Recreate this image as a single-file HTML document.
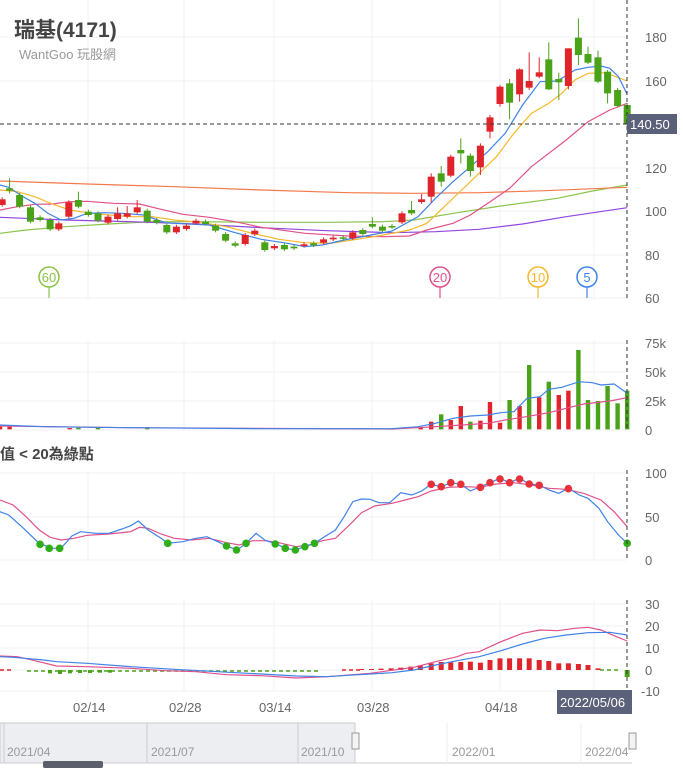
<!DOCTYPE html>
<html><head><meta charset="utf-8">
<style>
html,body{margin:0;padding:0;background:#fff;width:683px;height:768px;overflow:hidden}
svg{display:block;font-family:"Liberation Sans","Noto Sans CJK TC",sans-serif}
</style></head><body>
<svg id="s" width="683" height="768" viewBox="0 0 683 768" xmlns="http://www.w3.org/2000/svg">
<g stroke="#eef0f3" stroke-width="1">
<line x1="0" y1="37" x2="627" y2="37"/><line x1="0" y1="81" x2="627" y2="81"/><line x1="0" y1="168" x2="627" y2="168"/><line x1="0" y1="211" x2="627" y2="211"/><line x1="0" y1="255" x2="627" y2="255"/><line x1="0" y1="298" x2="627" y2="298"/>
<line x1="0" y1="343" x2="627" y2="343"/><line x1="0" y1="372" x2="627" y2="372"/><line x1="0" y1="401" x2="627" y2="401"/><line x1="0" y1="430" x2="627" y2="430"/>
<line x1="0" y1="473" x2="627" y2="473"/><line x1="0" y1="517" x2="627" y2="517"/><line x1="0" y1="560" x2="627" y2="560"/>
<line x1="0" y1="604" x2="627" y2="604"/><line x1="0" y1="626" x2="627" y2="626"/><line x1="0" y1="648" x2="627" y2="648"/><line x1="0" y1="670" x2="627" y2="670"/><line x1="0" y1="691" x2="627" y2="691"/>
<g id="vg"></g>
</g>
<g font-size="13" fill="#666">
<text x="645" y="42">180</text><text x="645" y="86">160</text><text x="645" y="173">120</text><text x="645" y="216">100</text><text x="645" y="260">80</text><text x="645" y="303">60</text>
<text x="645" y="348">75k</text><text x="645" y="377">50k</text><text x="645" y="406">25k</text><text x="645" y="435">0</text>
<text x="645" y="478">100</text><text x="645" y="522">50</text><text x="645" y="565">0</text>
<text x="645" y="609">30</text><text x="645" y="631">20</text><text x="645" y="653">10</text><text x="645" y="675">0</text><text x="641" y="696">-10</text>
<text x="73" y="712">02/14</text><text x="169" y="712">02/28</text><text x="259" y="712">03/14</text><text x="357" y="712">03/28</text><text x="485" y="712">04/18</text>
</g>
<text x="14" y="37" font-size="21" font-weight="bold" fill="#444">瑞基(4171)</text>
<text x="19" y="59" font-size="13" fill="#999">WantGoo 玩股網</text>
<text x="0" y="459" font-size="15" font-weight="bold" fill="#444">值 &lt; 20為綠點</text>
<g id="d"></g>
<line x1="0" y1="124" x2="627" y2="124" stroke="#333" stroke-dasharray="4,3"/>
<g stroke="#333" stroke-dasharray="4,3"><line x1="627" y1="0" x2="627" y2="298"/><line x1="627" y1="340" x2="627" y2="430"/><line x1="627" y1="470" x2="627" y2="560"/><line x1="627" y1="600" x2="627" y2="690"/></g>
<rect x="627" y="114" width="50" height="20" fill="#5b6178"/><text x="630" y="129" font-size="13" fill="#fff">140.50</text>
<rect x="557" y="690" width="75" height="24" fill="#5b6178"/><text x="560" y="707" font-size="13" fill="#fff">2022/05/06</text>
<g id="m"></g>
<rect x="0" y="723" width="355" height="40" fill="#eceef2" stroke="#ccc"/>
<line x1="4" y1="723" x2="4" y2="763" stroke="#ccc"/><line x1="147" y1="723" x2="147" y2="763" stroke="#ccc"/><line x1="298" y1="723" x2="298" y2="763" stroke="#ccc"/>
<line x1="355" y1="763" x2="632" y2="763" stroke="#ccc"/>
<line x1="447" y1="723" x2="447" y2="763" stroke="#eee"/><line x1="581" y1="723" x2="581" y2="763" stroke="#eee"/>
<g font-size="12" fill="#999"><text x="7" y="756">2021/04</text><text x="151" y="756">2021/07</text><text x="301" y="756">2021/10</text><text x="452" y="756">2022/01</text><text x="585" y="756">2022/04</text></g>
<rect x="352" y="733" width="7" height="16" fill="#f3f3f3" stroke="#999"/><rect x="629" y="733" width="7" height="16" fill="#f3f3f3" stroke="#999"/>
<rect x="43" y="761" width="60" height="7" rx="2" fill="#5a5f6b"/>
</svg>
<script>
var NS="http://www.w3.org/2000/svg",D=document.getElementById('d');
function el(t,a,p){var e=document.createElementNS(NS,t);for(var k in a)e.setAttribute(k,a[k]);(p||D).appendChild(e);return e;}
var X=function(z){return z/2.296};
var vg=document.getElementById('vg');
[88,184,274,372,500,594].forEach(function(x){el('line',{x1:x,y1:0,x2:x,y2:300},vg);el('line',{x1:x,y1:340,x2:x,y2:430},vg);el('line',{x1:x,y1:473,x2:x,y2:560},vg);el('line',{x1:x,y1:600,x2:x,y2:691},vg);});
function line(pts,col,yo,w){var s=pts.map(function(p){return X(p[0]).toFixed(1)+','+(yo+p[1]/3).toFixed(1)}).join(' ');el('polyline',{points:s,fill:'none',stroke:col,'stroke-width':w||1.2});}
var R='#e0242b',G='#4aa219';
// MAs
line([[0,700],[60,690],[150,680],[250,672],[350,665],[450,665],[600,667],[750,667],[880,665],[950,660],[1050,638],[1150,618],[1280,595],[1360,573],[1440,555]],'#8bc34a',0);
line([[0,543],[200,552],[400,560],[600,570],[800,578],[950,580],[1100,578],[1250,572],[1440,562]],'#f47a4a',0);
line([[0,652],[150,660],[300,665],[450,672],[600,683],[750,692],[900,698],[1000,695],[1100,688],[1200,672],[1300,650],[1440,623]],'#9147e0',0);
line([[0,630],[40,620],[80,613],[120,612],[160,605],[200,604],[260,610],[320,612],[360,625],[420,643],[480,652],[540,665],[600,682],[700,700],[800,708],[880,710],[940,708],[980,690],[1040,670],[1080,645],[1120,610],[1170,565],[1220,500],[1260,460],[1300,420],[1350,365],[1400,330],[1440,310]],'#e0508a',0);
line([[0,570],[40,575],[80,590],[120,612],[160,630],[200,638],[250,645],[300,650],[350,650],[400,660],[460,667],[520,680],[580,700],[640,718],[700,728],[760,730],[820,718],[880,705],[940,690],[980,670],[1020,620],[1060,570],[1100,520],[1140,470],[1180,400],[1220,340],[1260,310],[1290,280],[1320,240],[1350,220],[1390,218],[1440,243]],'#f5b82a',0);
line([[0,555],[20,562],[50,588],[80,610],[110,640],[140,660],[170,655],[200,640],[240,638],[280,640],[330,645],[380,668],[430,672],[480,675],[540,698],[600,718],[660,730],[700,740],[740,735],[790,720],[840,708],[900,693],[960,650],[1000,595],[1040,545],[1080,500],[1120,455],[1160,400],[1200,315],[1240,245],[1280,243],[1320,210],[1350,202],[1380,198],[1400,205],[1420,230],[1440,283]],'#3f82e8',0);
// candles [zx,top,bot,c,wt,wb]
var C=[[5,598,615,'r'],[22,565,572,'g',535,580],[45,585,620,'g'],[70,622,665,'g'],[92,652,660,'g'],[115,660,688,'g'],[135,670,688,'r'],[158,607,650,'r'],[180,600,620,'g',575],[203,635,645,'g'],[225,640,662,'g'],[248,650,668,'r'],[270,640,657,'r',622],[292,640,650,'r',618],[315,622,637,'r',600],[338,632,665,'g'],[360,660,668,'g'],[383,675,697,'g'],[405,680,697,'r'],[428,677,687,'r'],[450,662,670,'r'],[472,665,672,'g'],[495,677,692,'g'],[518,702,722,'g'],[540,730,737,'g'],[563,705,732,'r'],[585,692,703,'r'],[608,727,750,'g'],[630,738,745,'r'],[653,735,748,'g'],[675,740,745,'g'],[698,733,738,'r'],[720,730,736,'g'],[743,718,728,'r'],[765,713,718,'r'],[788,712,716,'g'],[810,697,715,'r'],[833,690,702,'g'],[855,672,680,'g',652],[878,680,692,'g'],[900,678,682,'g'],[923,640,667,'r'],[945,630,640,'g',603],[968,598,606,'r',582],[990,530,590,'r',520,608],[1013,520,545,'g',498,560],[1035,470,527,'r'],[1058,450,460,'g',415,490],[1080,467,513,'g',460,530],[1103,437,502,'r',430,525],[1125,352,395,'r',345,415],[1148,260,312,'r',255,320],[1170,250,308,'g',237,358],[1193,208,283,'r',205,305],[1215,243,263,'r',157,270],[1238,217,230,'r',172,235],[1260,178,268,'g',127,270],[1283,237,247,'g',218,300],[1305,145,258,'r',145,268],[1328,113,165,'g',55,195],[1350,162,188,'g',140,192],[1373,172,245,'g',152,250],[1395,215,280,'g',210,310],[1418,270,318,'g'],[1440,315,372,'g']];
C.forEach(function(c){var x=X(c[0]),col=c[3]=='r'?R:G;var wt=c[4]||c[1]-6,wb=c[5]||c[2]+5;
el('line',{x1:x,y1:wt/3,x2:x,y2:wb/3,stroke:col,'stroke-width':1});
el('rect',{x:x-3.5,y:c[1]/3,width:7,height:Math.max(1.5,(c[2]-c[1])/3),fill:col});});
// markers
[[49,'60','#8bc34a'],[440,'20','#e0508a'],[538,'10','#f5b82a'],[587,'5','#3f82e8']].forEach(function(m){
el('line',{x1:m[0],y1:287,x2:m[0],y2:298,stroke:m[2],'stroke-width':1.2});
el('circle',{cx:m[0],cy:277,r:10,fill:'#fff',stroke:m[2],'stroke-width':1.5});
var t=el('text',{x:m[0],y:282,'text-anchor':'middle','font-size':13,fill:m[2]});t.textContent=m[1];});
// volume
var V=[[966,292,'r'],[990,275,'r'],[1013,253,'g'],[1035,270,'r'],[1058,228,'r'],[1080,275,'g'],[1103,272,'r'],[1125,216,'r'],[1148,278,'r'],[1170,210,'g'],[1193,228,'r'],[1215,105,'g'],[1238,202,'r'],[1260,155,'g'],[1283,195,'r'],[1305,182,'r'],[1328,60,'g'],[1350,210,'g'],[1373,213,'g'],[1395,168,'g'],[1418,220,'g'],[1440,182,'g'],[0,290,'r'],[22,290,'r'],[160,294,'r'],[180,293,'g'],[225,294,'g'],[338,294,'g']];
V.forEach(function(v){el('rect',{x:X(v[0])-2.2,y:330+v[1]/3,width:4.4,height:(298-v[1])/3,fill:v[2]=='r'?R:G});});
line([[0,288],[300,293],[900,297],[1000,290],[1060,285],[1120,280],[1160,270],[1200,262],[1260,248],[1300,235],[1340,222],[1400,213],[1440,203]],'#e0508a',330);
line([[0,285],[100,290],[300,293],[600,296],[900,296],[960,290],[1000,280],[1040,265],[1080,258],[1120,255],[1150,248],[1180,245],[1210,205],[1240,200],[1260,178],[1290,172],[1330,155],[1360,158],[1380,165],[1410,162],[1440,190]],'#3f82e8',330);
// KD
line([[0,510],[30,525],[60,560],[90,600],[115,622],[140,630],[170,625],[200,616],[250,612],[300,605],[320,592],[340,595],[370,612],[400,625],[440,630],[480,625],[520,638],[550,645],[580,632],[610,632],[640,638],[680,650],[710,645],[740,632],[770,625],[800,588],[830,548],[860,528],[900,520],[930,510],[960,500],[990,483],[1030,472],[1070,470],[1100,472],[1140,462],[1180,458],[1220,465],[1260,475],[1300,478],[1340,490],[1380,510],[1410,545],[1440,590]],'#e0508a',330);
line([[0,545],[20,555],[50,590],[90,640],[120,655],[140,655],[165,618],[185,605],[220,610],[250,610],[280,597],[300,587],[318,573],[340,600],[370,625],[385,640],[420,635],[450,625],[475,620],[500,635],[520,648],[545,660],[565,640],[588,610],[610,632],[632,640],[655,655],[678,660],[700,650],[722,640],[745,620],[770,600],[790,560],[810,515],[830,507],[850,508],[870,518],[895,518],[920,488],[945,495],[968,483],[990,463],[1013,470],[1035,458],[1058,463],[1080,483],[1103,470],[1125,458],[1148,445],[1170,458],[1193,445],[1215,462],[1238,465],[1260,480],[1283,490],[1305,475],[1330,495],[1350,505],[1375,535],[1395,575],[1420,615],[1440,640]],'#3f82e8',330);
[[92,643],[113,655],[137,655],[385,640],[520,648],[543,660],[565,640],[632,642],[655,655],[678,660],[700,650],[722,640],[1440,640]].forEach(function(p){el('circle',{cx:X(p[0]),cy:330+p[1]/3,r:3.8,fill:'#2fae1a'});});
[[990,463],[1013,470],[1035,458],[1058,463],[1103,472],[1125,458],[1148,447],[1170,458],[1193,447],[1215,462],[1238,466],[1305,476]].forEach(function(p){el('circle',{cx:X(p[0]),cy:330+p[1]/3,r:3.8,fill:'#e8303a'});});
// MACD
var Y0=590+240/3;
el('line',{x1:0,y1:Y0,x2:14,y2:Y0,stroke:R,'stroke-dasharray':'4,3','stroke-width':1.5});
el('line',{x1:342,y1:Y0,x2:360,y2:Y0,stroke:R,'stroke-dasharray':'4,3','stroke-width':1.5});
el('line',{x1:27,y1:Y0+1,x2:320,y2:Y0+1,stroke:G,'stroke-dasharray':'4,3','stroke-width':1.5});
el('line',{x1:600,y1:Y0,x2:618,y2:Y0,stroke:G,'stroke-dasharray':'4,3','stroke-width':1.5});
[[50,250],[60,252],[70,250],[80,249],[90,249],[100,248],[110,248]].forEach(function(b){el('rect',{x:b[0]-2,y:Y0,width:4,height:(b[1]-240)/3,fill:G});});
[[830,237],[853,237],[875,236],[898,235],[920,233],[943,230],[965,226],[990,220],[1013,216],[1035,217],[1058,216],[1080,215],[1103,218],[1125,210],[1148,205],[1170,205],[1193,205],[1215,205],[1238,210],[1260,213],[1283,220],[1305,220],[1328,222],[1350,225],[1373,235]].forEach(function(b){el('rect',{x:X(b[0])-2.5,y:590+b[1]/3,width:5,height:(240-b[1])/3,fill:R});});
el('rect',{x:X(1440)-2.5,y:Y0,width:5,height:7,fill:G});
line([[0,198],[40,200],[80,212],[130,228],[200,230],[300,235],[380,242],[450,245],[520,254],[600,257],[680,264],[750,260],[850,250],[950,232],[1000,215],[1050,200],[1070,190],[1100,185],[1150,155],[1200,130],[1240,120],[1280,122],[1320,115],[1350,112],[1380,120],[1410,137],[1440,153]],'#e0508a',590);
line([[0,200],[30,202],[100,210],[130,215],[200,220],[300,230],[400,238],[500,245],[600,252],[680,258],[750,260],[800,256],[850,252],[900,248],[950,240],[1000,225],[1050,212],[1100,200],[1150,182],[1200,162],[1250,145],[1300,135],[1350,128],[1400,127],[1440,135]],'#3f82e8',590);
</script>
</body></html>
